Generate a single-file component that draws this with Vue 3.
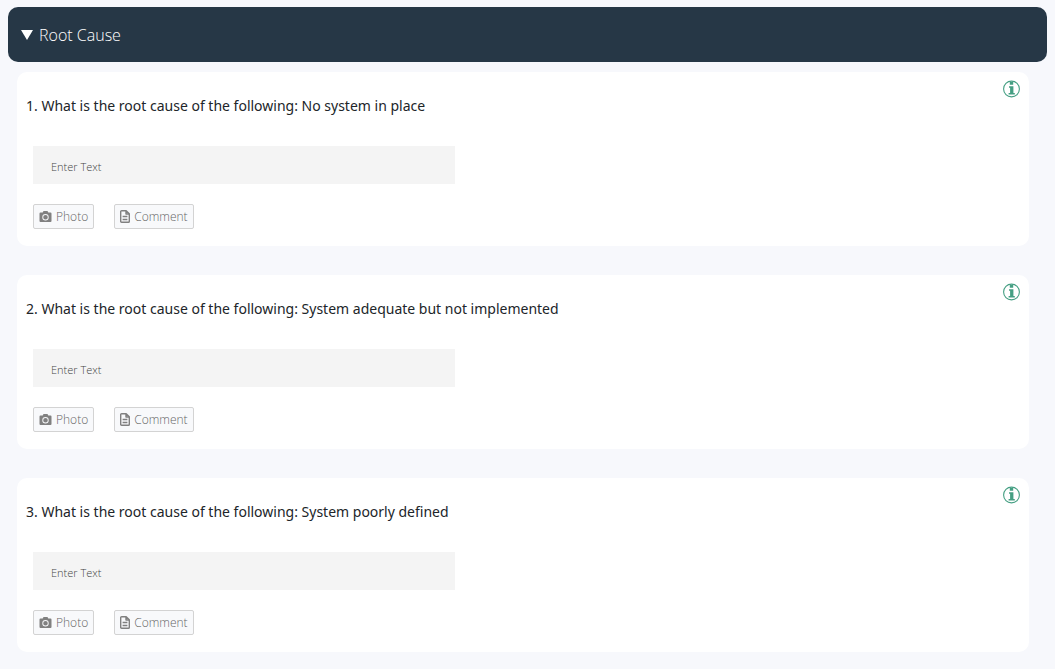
<script setup>
import { ref } from 'vue'

const open = ref(true)
const questions = ref([
  { id: 1, text: 'What is the root cause of the following: No system in place', answer: '' },
  { id: 2, text: 'What is the root cause of the following: System adequate but not implemented', answer: '' },
  { id: 3, text: 'What is the root cause of the following: System poorly defined', answer: '' }
])
</script>

<template>
  <main class="page">
    <button class="section-header" type="button" :aria-expanded="open" @click="open = !open">
      <svg class="caret" :class="{ closed: !open }" viewBox="0 0 12 10" aria-hidden="true">
        <path d="M0 0h12L6 10z" fill="currentColor" />
      </svg>
      <span>Root Cause</span>
    </button>

    <div v-if="open" class="questions">
      <section v-for="q in questions" :key="q.id" class="card">
        <button class="info" type="button" aria-label="Information">
          <svg viewBox="0 0 18 18" aria-hidden="true">
            <circle cx="8.500" cy="9" r="7.900" fill="none" stroke="currentColor" stroke-width="1.1" />
            <path d="M6.800 2h3.400v2.700H6.800zM6 6.200h4.400v6.700h1.400v1.600H5.600v-1.600h1.500V7.800H6z" fill="currentColor" />
          </svg>
        </button>
        <label class="question" :for="'answer-' + q.id">{{ q.id }}. {{ q.text }}</label>
        <input :id="'answer-' + q.id" v-model="q.answer" class="answer" type="text" placeholder="Enter Text" />
        <div class="actions">
          <button class="action" type="button">
            <svg class="camera" viewBox="0 0 12 11" aria-hidden="true">
              <path
                fill="currentColor"
                fill-rule="evenodd"
                d="M4 0h4l.8 1.6H11a1 1 0 0 1 1 1V10a1 1 0 0 1-1 1H1a1 1 0 0 1-1-1V2.600a1 1 0 0 1 1-1h2.200zM6 3a3.200 3.200 0 1 0 0 6.400A3.200 3.200 0 0 0 6 3zm0 .9a2.300 2.300 0 1 1 0 4.600 2.300 2.300 0 0 1 0-4.600z"
              />
            </svg>
            <span>Photo</span>
          </button>
          <button class="action" type="button">
            <svg class="file" viewBox="0 0 10 13" aria-hidden="true">
              <path
                fill="none"
                stroke="currentColor"
                stroke-width="1.4"
                stroke-linejoin="round"
                d="M1.600.7h4.600l3.100 3.100v7.600a.9.9 0 0 1-.9.9H1.600a.9.9 0 0 1-.9-.9V1.600a.9.9 0 0 1 .9-.9zM6 .9V4h3.200M2.600 6.500h4.800M2.600 9.500h4.800"
              />
            </svg>
            <span>Comment</span>
          </button>
        </div>
      </section>
    </div>
  </main>
</template>

<style>
body {
  background: #f7f8fc;
}
</style>

<style scoped>
.page {
  padding: 7px 8px 16px;
  font-family: "Open Sans", "Noto Sans", sans-serif;
}

button,
input {
  font-family: inherit;
}

.section-header {
  display: flex;
  align-items: center;
  gap: 6px;
  width: 100%;
  padding: 16px 13px;
  border: 0;
  border-radius: 10px;
  background: #263746;
  color: #fff;
  font-size: 16px;
  font-weight: 300;
  line-height: 23px;
  text-align: left;
  cursor: pointer;
}

.section-header span {
  padding-top: 2px;
  line-height: 21px;
}

.caret {
  width: 12px;
  height: 10px;
}

.caret.closed {
  transform: rotate(-90deg);
}

.questions {
  display: flex;
  flex-direction: column;
  gap: 29px;
  padding: 10px 18px 0 9px;
}

.card {
  position: relative;
  display: flex;
  flex-direction: column;
  align-items: flex-start;
  padding: 22px 16px 17px;
  border-radius: 10px;
  background: #fff;
}

.info {
  position: absolute;
  top: 8px;
  right: 8px;
  width: 18px;
  height: 18px;
  padding: 0;
  border: 0;
  background: none;
  color: #459f83;
  cursor: pointer;
}

.info svg {
  display: block;
  width: 18px;
  height: 18px;
}

.question {
  margin: 0 32px 28px -7px;
  color: #212529;
  font-family: "Noto Sans", "Open Sans", sans-serif;
  font-size: 14px;
  line-height: 24px;
}

.answer {
  box-sizing: border-box;
  width: 422px;
  max-width: 100%;
  height: 38px;
  padding: 2px 18px 0;
  border: 0;
  background: #f4f4f4;
  color: #444;
  font-size: 11px;
  font-weight: 300;
}

.answer::placeholder {
  color: #444;
  opacity: 1;
}

.actions {
  display: flex;
  gap: 20px;
  margin-top: 20px;
}

.action {
  display: flex;
  align-items: center;
  gap: 4px;
  padding: 0 5px;
  border: 1px solid #d3d3d3;
  border-radius: 2px;
  background: #f8f9fb;
  color: #808080;
  font-size: 12px;
  font-weight: 300;
  line-height: 22px;
  cursor: pointer;
}

.action span {
  padding-top: 1px;
  color: #666;
}

.camera {
  width: 13px;
  height: 11px;
}

.file {
  width: 10px;
  height: 13px;
}
</style>
